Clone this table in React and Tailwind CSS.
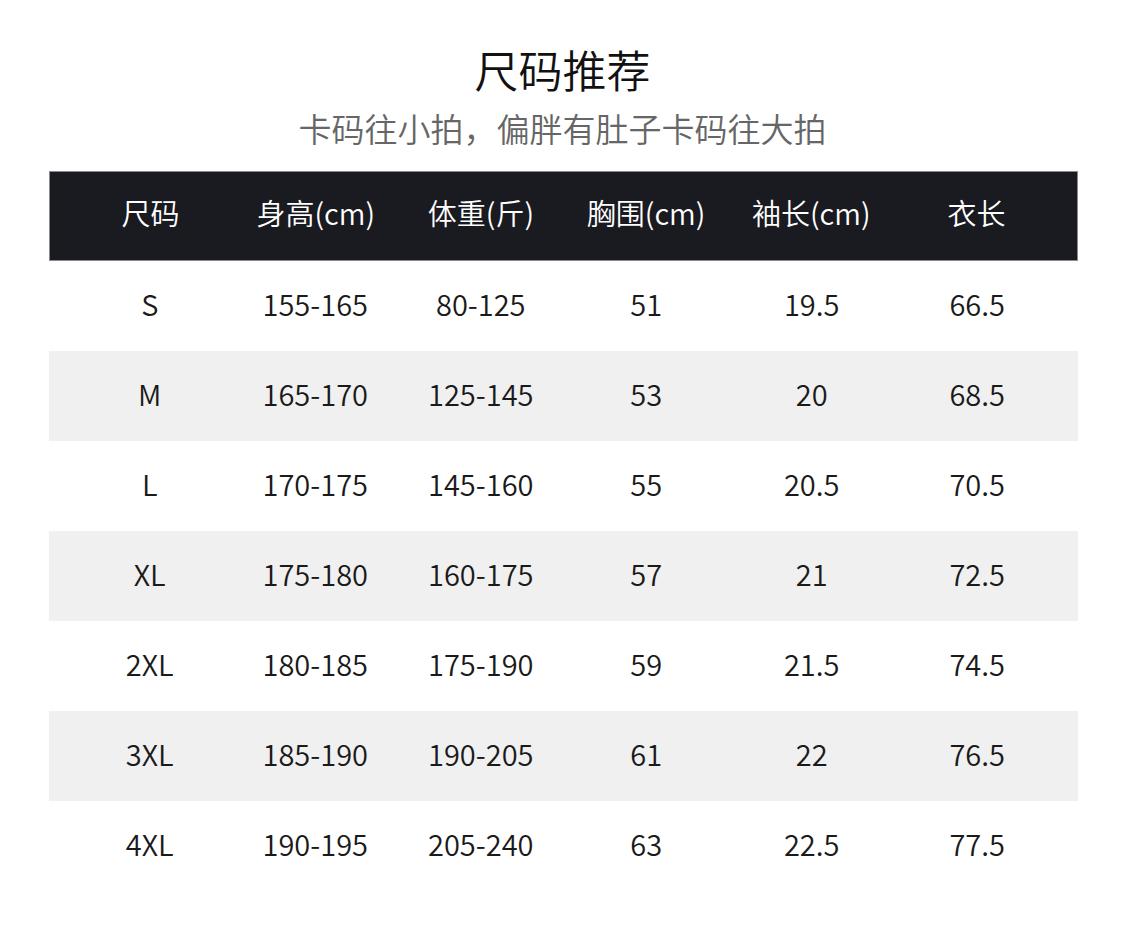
const headers = ["尺码", "身高(cm)", "体重(斤)", "胸围(cm)", "袖长(cm)", "衣长"];

const rows = [
  ["S", "155-165", "80-125", "51", "19.5", "66.5"],
  ["M", "165-170", "125-145", "53", "20", "68.5"],
  ["L", "170-175", "145-160", "55", "20.5", "70.5"],
  ["XL", "175-180", "160-175", "57", "21", "72.5"],
  ["2XL", "180-185", "175-190", "59", "21.5", "74.5"],
  ["3XL", "185-190", "190-205", "61", "22", "76.5"],
  ["4XL", "190-195", "205-240", "63", "22.5", "77.5"],
];

export default function App() {
  return (
    <div
      className="w-[1125px] h-[937px] bg-white pt-[47px] font-[350]"
      style={{ fontFamily: '"Noto Sans CJK SC", "Noto Sans", sans-serif' }}
    >
      <h1 className="text-center text-[44px] leading-[44px] text-[#111] font-[350]">尺码推荐</h1>
      <p className="mt-[21px] text-center text-[33px] leading-[33px] text-[#666]">
        卡码往小拍，偏胖有肚子卡码往大拍
      </p>

      <div className="mx-[49px] mt-[26px] w-[1029px]">
        <div className="grid grid-cols-6 h-[90px] items-center px-[18px] pb-[6px] bg-[#1a1a21] border border-[#8a8a8e] text-white text-[29px]">
          {headers.map((h) => (
            <div key={h} className="text-center">
              {h}
            </div>
          ))}
        </div>

        {rows.map((row, i) => (
          <div
            key={row[0]}
            className={`grid grid-cols-6 h-[90px] items-center px-[18px] pb-[4px] text-[29px] text-[#1a1a1a] ${
              i % 2 === 1 ? "bg-[#f0f0f0]" : "bg-white"
            }`}
          >
            {row.map((cell, j) => (
              <div key={j} className="text-center">
                {cell}
              </div>
            ))}
          </div>
        ))}
      </div>
    </div>
  );
}
